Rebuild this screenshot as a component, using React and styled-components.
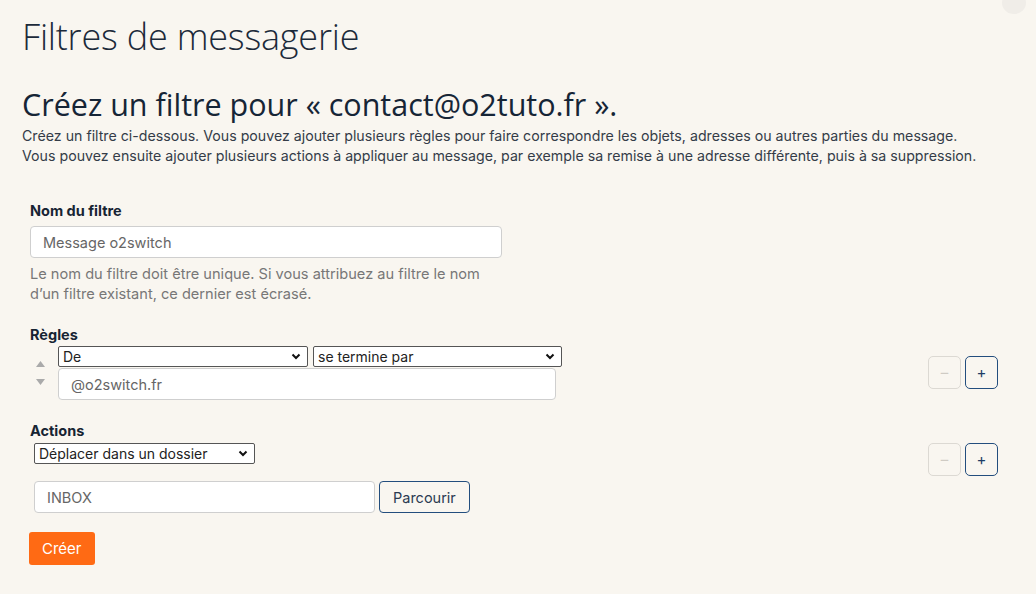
import styled, { createGlobalStyle } from 'styled-components';

const Global = createGlobalStyle`
  html, body {
    margin: 0;
    background: #f9f6f0;
  }
  body {
    font-family: Inter, "Open Sans", sans-serif;
    color: #2b3340;
  }
`;

function Chevron() {
  return (
    <svg width="10" height="7" viewBox="0 0 10 7">
      <path d="M1.5 1.5 L5 5 L8.5 1.5" fill="none" stroke="#111" strokeWidth="2" />
    </svg>
  );
}

function NativeSelect({ value, width }) {
  return (
    <SelectBox $width={width}>
      <span>{value}</span>
      <Chevron />
    </SelectBox>
  );
}

function StepButtons({ top }) {
  return (
    <Steps $top={top}>
      <StepBtn disabled>–</StepBtn>
      <StepBtn $active>+</StepBtn>
    </Steps>
  );
}

function Triangle({ down }) {
  return (
    <svg width="9" height="6" viewBox="0 0 9 6">
      <path d={down ? 'M0 0 H9 L4.5 6 Z' : 'M0 6 H9 L4.5 0 Z'} fill="#aaa" />
    </svg>
  );
}

export default function App() {
  return (
    <Page>
      <Global />
      <Corner />
      <Title>Filtres de messagerie</Title>
      <Heading>Créez un filtre pour « contact@o2tuto.fr ».</Heading>
      <Intro>
        Créez un filtre ci-dessous. Vous pouvez ajouter plusieurs règles pour faire correspondre les objets, adresses ou autres parties du message.<br />
        Vous pouvez ensuite ajouter plusieurs actions à appliquer au message, par exemple sa remise à une adresse différente, puis à sa suppression.
      </Intro>

      <Form>
        <Field>
          <Label>Nom du filtre</Label>
          <TextInput $width={472}>Message o2switch</TextInput>
          <Help>
            Le nom du filtre doit être unique. Si vous attribuez au filtre le nom<br />
            d’un filtre existant, ce dernier est écrasé.
          </Help>
        </Field>

        <Field $gap={2}>
          <Label>Règles</Label>
          <Row>
            <RuleBody>
              <Arrows>
                <Triangle />
                <Triangle down />
              </Arrows>
              <Stack>
                <SelectLine>
                  <NativeSelect value="De" width={250} />
                  <NativeSelect value="se termine par" width={249} />
                </SelectLine>
                <TextInput $width={498}>@o2switch.fr</TextInput>
              </Stack>
            </RuleBody>
            <StepButtons top={10} />
          </Row>
        </Field>

        <Field $gap={3}>
          <Label>Actions</Label>
          <Row>
            <ActionBody>
              <NativeSelect value="Déplacer dans un dossier" width={221} />
              <Browse>
                <TextInput $width={341}>INBOX</TextInput>
                <Outline>Parcourir</Outline>
              </Browse>
            </ActionBody>
            <StepButtons top={0} />
          </Row>
        </Field>

        <Create>Créer</Create>
      </Form>
    </Page>
  );
}

const Page = styled.div`
  position: relative;
  min-height: 594px;
  box-sizing: border-box;
  padding: 12px 22px 0;
`;

const Corner = styled.div`
  position: absolute;
  top: -8px;
  right: 10px;
  width: 24px;
  height: 22px;
  border-radius: 50%;
  background: #f0ede8;
`;

const Title = styled.h1`
  margin: 0;
  font-family: "Open Sans", sans-serif;
  font-weight: 300;
  font-size: 36px;
  line-height: 50px;
  color: #1c2a3a;
  letter-spacing: -0.2px;
`;

const Heading = styled.h2`
  margin: 24px 0 0;
  font-family: "Open Sans", sans-serif;
  font-weight: 500;
  font-size: 30.5px;
  line-height: 36px;
  color: #162536;
`;

const Intro = styled.p`
  margin: 4px 0 0;
  font-size: 14.2px;
  line-height: 20px;
  color: #343c48;
`;

const Form = styled.div`
  display: flex;
  flex-direction: column;
  padding: 0 16px 0 8px;
  margin-top: 36px;
`;

const Field = styled.div`
  display: flex;
  flex-direction: column;
  align-items: flex-start;
  gap: ${p => (p.$gap ?? 6)}px;
  margin-bottom: 22px;
`;

const Label = styled.div`
  font-weight: 700;
  font-size: 14.5px;
  line-height: 18px;
  color: #172433;
`;

const TextInput = styled.div`
  width: ${p => p.$width}px;
  height: 32px;
  box-sizing: border-box;
  background: #fff;
  border: 1px solid #cfcfcf;
  border-radius: 4px;
  padding: 0 12px;
  display: flex;
  align-items: center;
  font-size: 14.5px;
  color: #666;
`;

const Help = styled.div`
  font-size: 14.6px;
  line-height: 20px;
  color: #777;
`;

const Row = styled.div`
  display: flex;
  align-items: flex-start;
  justify-content: space-between;
  width: 100%;
`;

const RuleBody = styled.div`
  display: flex;
  align-items: flex-start;
  gap: 13px;
  padding-left: 6px;
`;

const Arrows = styled.div`
  display: flex;
  flex-direction: column;
  gap: 12px;
  padding-top: 15px;
`;

const Stack = styled.div`
  display: flex;
  flex-direction: column;
  gap: 1px;
`;

const SelectLine = styled.div`
  display: flex;
  gap: 5px;
`;

const SelectBox = styled.div`
  width: ${p => p.$width}px;
  height: 21px;
  box-sizing: border-box;
  display: flex;
  align-items: center;
  justify-content: space-between;
  padding: 0 6px 0 4px;
  background: #fff;
  border: 1px solid #555;
  border-radius: 2px;
  font-size: 14px;
  color: #222;
`;

const ActionBody = styled.div`
  display: flex;
  flex-direction: column;
  gap: 17px;
  padding-left: 4px;
`;

const Browse = styled.div`
  display: flex;
  gap: 4px;
`;

const Outline = styled.button`
  height: 32px;
  padding: 0 13px;
  background: transparent;
  border: 1px solid #234e7e;
  border-radius: 4px;
  font-family: Inter, sans-serif;
  font-size: 14.5px;
  color: #2b3a52;
`;

const Steps = styled.div`
  display: flex;
  gap: 4px;
  margin-top: ${p => p.$top}px;
`;

const StepBtn = styled.button`
  width: 33px;
  height: 33px;
  padding: 0;
  background: transparent;
  border-radius: 5px;
  border: 1px solid ${p => (p.$active ? '#234e7e' : '#dcd9d3')};
  color: ${p => (p.$active ? '#1e3d66' : '#cfcbc4')};
  font-family: Inter, sans-serif;
  font-size: 15px;
  line-height: 1;
`;

const Create = styled.button`
  align-self: flex-start;
  margin-top: -3px;
  margin-left: -1px;
  height: 33px;
  padding: 0 13px;
  background: #ff6a14;
  border: none;
  border-radius: 3px;
  color: #fff;
  font-family: Inter, sans-serif;
  font-size: 15px;
`;
